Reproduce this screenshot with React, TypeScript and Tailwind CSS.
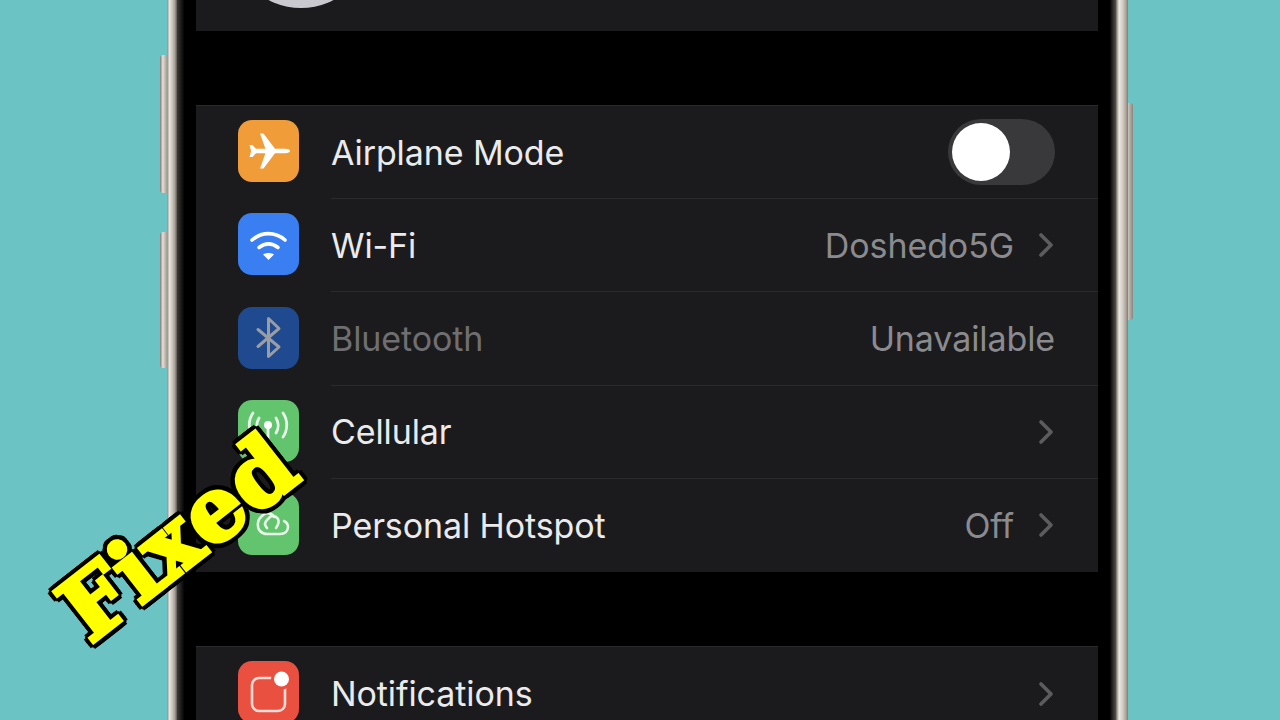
import { ChevronRight } from "lucide-react";
import type { ReactNode } from "react";

const metalLeft =
  "bg-[linear-gradient(90deg,#8f8a84_0%,#e8e4de_25%,#c9c2b9_55%,#a29b92_80%,#5c5853_100%)]";
const metalRight =
  "bg-[linear-gradient(90deg,#6b6761_0%,#ebe7e2_25%,#d2ccc4_55%,#a8a198_85%,#7e7972_100%)]";

function Tile({ color, children }: { color: string; children: ReactNode }) {
  return (
    <div className={`mb-[3px] flex h-[62px] w-[61px] shrink-0 items-center justify-center rounded-[14px] ${color}`}>
      <svg viewBox="0 0 61 62" className="h-[62px] w-[61px]">
        {children}
      </svg>
    </div>
  );
}

function Row({
  icon,
  label,
  value,
  chevron = true,
  dim = false,
  last = false,
  children,
}: {
  icon: ReactNode;
  label: string;
  value?: string;
  chevron?: boolean;
  dim?: boolean;
  last?: boolean;
  children?: ReactNode;
}) {
  return (
    <div className="flex min-h-0 flex-1 items-center pl-[42px]">
      {icon}
      <div
        className={`ml-[32px] flex h-full flex-1 items-center justify-between pr-[43px] ${
          last ? "" : "border-b border-[#2b2b2d]"
        }`}
      >
        <span className={`text-[34px] tracking-[-0.1px] ${dim ? "text-[#6f6f72]" : "text-[#ebebed]"}`}>{label}</span>
        <div className="flex items-center">
          {value && <span className="text-[34px] tracking-[-0.1px] text-[#8b8b8f]">{value}</span>}
          {chevron && (
            <ChevronRight size={40} strokeWidth={2.2} className="ml-[12px] mr-[-11px] text-[#5c5c5f]" />
          )}
          {children}
        </div>
      </div>
    </div>
  );
}

export default function App() {
  return (
    <div className="relative flex h-[720px] w-[1280px] overflow-hidden bg-[#6cc3c4] pl-[160px] font-['Inter',sans-serif]">
      {/* side buttons */}
      <div className="flex w-[7px] flex-col gap-[39px] pt-[55px]">
        <div className="h-[138px] rounded-l-[3px] bg-[linear-gradient(90deg,#7d7973,#e4e0da_40%,#a29b92)]" />
        <div className="h-[136px] rounded-l-[3px] bg-[linear-gradient(90deg,#7d7973,#e4e0da_40%,#a29b92)]" />
      </div>

      {/* phone */}
      <div className="flex h-full w-[961px]">
        <div className={`w-[10px] ${metalLeft}`} />
        <div className="w-[19px] bg-[linear-gradient(90deg,#3d3b38_0%,#000_40%)]" />

        <div className="flex w-[902px] flex-col bg-black">
          <div className="h-[31px] shrink-0 overflow-hidden bg-[#1b1b1d]">
            <div className="ml-[35px] mt-[-132px] h-[140px] w-[140px] rounded-full bg-[#c9c9cf]" />
          </div>

          <div className="mt-[74px] flex h-[467px] shrink-0 flex-col border-t border-[#2a2a2c] bg-[#1b1b1d]">
            <Row
              label="Airplane Mode"
              chevron={false}
              icon={
                <Tile color="bg-[#f09c38]">
                  <path
                    fill="#fff"
                    d="M52 31c0-1.300-2-2.200-4.500-2.200H37L25.500 13.500h-3.500l5.400 15.300H18L14.500 25H11.500l1.600 6-1.600 6h3L18 33.200h9.400L22 48.500h3.500L37 33.200h10.500c2.500 0 4.500-.9 4.500-2.200z"
                  />
                </Tile>
              }
            >
              <div className="flex h-[66px] w-[107px] items-center rounded-full bg-[#39393c] pl-[4px]">
                <div className="h-[58px] w-[58px] rounded-full bg-white" />
              </div>
            </Row>
            <Row
              label="Wi-Fi"
              value="Doshedo5G"
              icon={
                <Tile color="bg-[#3a7ff2]">
                  <g fill="none" stroke="#fff" strokeWidth="3.600" strokeLinecap="round">
                    <path d="M14 27c10-8.500 23-8.500 33 0" />
                    <path d="M21 34.500c6-4.500 13-4.500 19 0" />
                  </g>
                  <path fill="#fff" d="M25 41.500c3-2 8-2 11 0l-5.500 5.500z" />
                </Tile>
              }
            />
            <Row
              label="Bluetooth"
              value="Unavailable"
              chevron={false}
              dim
              icon={
                <Tile color="bg-[#204a8f]">
                  <path
                    d="M20 22.500l21 17.500-10.500 9.500v-38L41 21.500 20 39.500"
                    fill="none"
                    stroke="#9a9da3"
                    strokeWidth="3"
                    strokeLinejoin="round"
                    strokeLinecap="round"
                  />
                </Tile>
              }
            />
            <Row
              label="Cellular"
              icon={
                <Tile color="bg-[#62c46c]">
                  <g fill="none" stroke="#e8f7ea" strokeWidth="2.800" strokeLinecap="round">
                    <path d="M15 13c-5 7-5 17 0 24" />
                    <path d="M21 18c-3 5-3 10 0 15" />
                    <path d="M38 18c3 5 3 10 0 15" />
                    <path d="M45 13c5 7 5 17 0 24" />
                    <path d="M30 26v18" />
                  </g>
                  <circle cx="30" cy="25" r="4" fill="#fff" />
                </Tile>
              }
            />
            <Row
              label="Personal Hotspot"
              value="Off"
              last
              icon={
                <Tile color="bg-[#62c46c]">
                  <g fill="none" stroke="#e8f7ea" strokeWidth="2.600" strokeLinecap="round">
                    <path d="M36 24c-2-4-7-5-11-2l-3 3c-3 3-3 10 0 13 2 2 4 3 7 3h13c5 0 8-3 8-7 0-3-2-5-4-6" />
                    <path d="M29 35c-3-3-2-6 0-8l3-3c2-2 6-1 8 2 2 3 0 6-2 9" />
                  </g>
                </Tile>
              }
            />
          </div>

          <div className="mt-[74px] flex h-[94px] shrink-0 flex-col border-t border-[#2a2a2c] bg-[#1b1b1d]">
            <Row
              label="Notifications"
              last
              icon={
                <Tile color="bg-[#e9503f]">
                  <rect x="14" y="17" width="33" height="33" rx="7" fill="none" stroke="#fbdcd8" strokeWidth="2.600" />
                  <circle cx="43.500" cy="18" r="10.500" fill="#e9503f" />
                  <circle cx="43.500" cy="18" r="7.500" fill="#fff" />
                </Tile>
              }
            />
          </div>
        </div>

        <div className="w-[18px] bg-[linear-gradient(90deg,#000_65%,#55524e_100%)]" />
        <div className={`w-[12px] ${metalRight}`} />
      </div>

      <div className="w-[5px] pt-[103px]">
        <div className="h-[217px] rounded-r-[3px] bg-[linear-gradient(90deg,#c9c4bc,#8a857e)]" />
      </div>

      {/* overlay caption */}
      <div className="absolute left-[178px] top-[537px] -translate-x-1/2 -translate-y-1/2 -rotate-[38deg] whitespace-nowrap font-['DejaVu_Serif',serif] text-[88px] font-bold leading-none tracking-[1px] text-[#ffff00] [-webkit-text-stroke:4px_#ffff00] [text-shadow:6px_0_0_#000,-6px_0_0_#000,0_6px_0_#000,0_-6px_0_#000,4px_4px_0_#000,-4px_4px_0_#000,4px_-4px_0_#000,-4px_-4px_0_#000,6px_3px_0_#000,-6px_3px_0_#000,6px_-3px_0_#000,-6px_-3px_0_#000,3px_6px_0_#000,-3px_6px_0_#000,3px_-6px_0_#000,-3px_-6px_0_#000]">
        Fixed
      </div>
    </div>
  );
}
